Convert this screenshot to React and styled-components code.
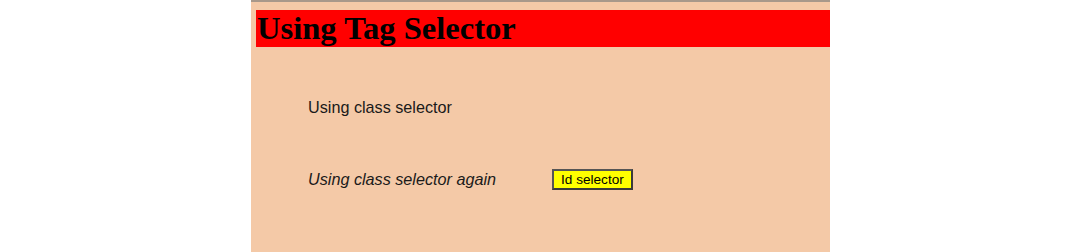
import React from "react";
import styled, { createGlobalStyle } from "styled-components";

const Global = createGlobalStyle`
  html, body { margin: 0; padding: 0; background: #ffffff; }
  #root { width: 1080px; height: 252px; overflow: hidden; }
`;

const Page = styled.div`
  width: 1080px;
  height: 252px;
  display: flex;
  justify-content: flex-start;
  padding-left: 251px;
  box-sizing: border-box;
`;

const Panel = styled.div`
  width: 579px;
  height: 252px;
  box-sizing: border-box;
  background: #f4c9a7;
  border-top: 2px solid #a8988a;
  padding: 8px 0 0 5px;
  display: flex;
  flex-direction: column;
`;

const Heading = styled.h1`
  margin: 0;
  background: #ff0000;
  color: #000;
  font-family: "Liberation Serif", "Times New Roman", serif;
  font-weight: bold;
  font-size: 32.6px;
  line-height: 37px;
  height: 37px;
  padding-left: 1px;
`;

const Row = styled.div`
  display: flex;
  align-items: center;
  padding-left: 52px;
  margin-top: ${(p) => p.$top}px;
  font-family: "Liberation Sans", Arial, sans-serif;
  font-size: 16.2px;
  color: #1a1a1a;
`;

const Text = styled.span`
  font-style: ${(p) => (p.$italic ? "italic" : "normal")};
`;

const IdButton = styled.span`
  margin-left: 56px;
  background: #ffff00;
  border: 2px solid #3a3a3a;
  border-top-color: #555;
  border-left-color: #555;
  font-family: "Liberation Sans", Arial, sans-serif;
  font-size: 13.6px;
  line-height: 17px;
  padding: 0 7px 0 7px;
  color: #000;
`;

export default function App() {
  return (
    <>
      <Global />
      <Page>
        <Panel>
          <Heading>Using Tag Selector</Heading>
          <Row $top={51}>
            <Text>Using class selector</Text>
          </Row>
          <Row $top={52}>
            <Text $italic>Using class selector again</Text>
            <IdButton>Id selector</IdButton>
          </Row>
        </Panel>
      </Page>
    </>
  );
}
